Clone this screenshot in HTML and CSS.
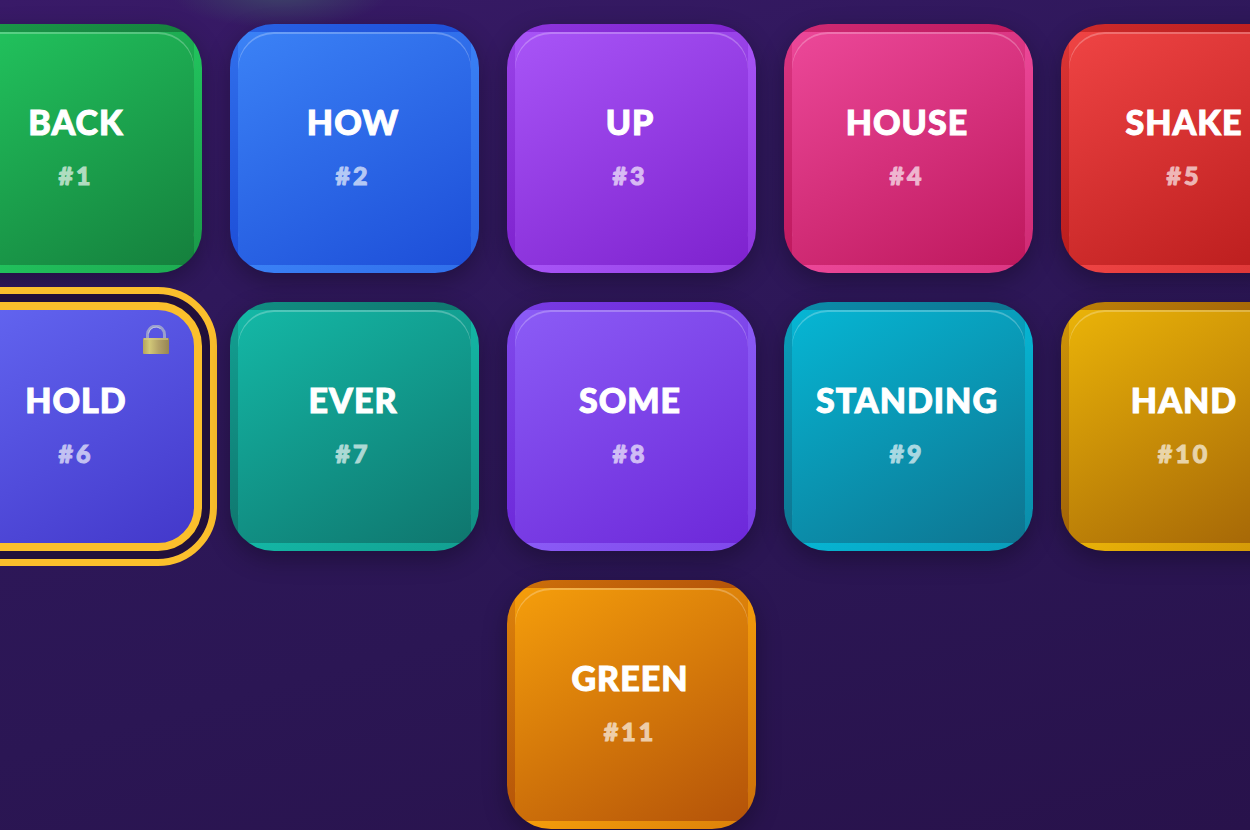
FILE: index.html
```html
<!DOCTYPE html>
<html lang="en">
<head>
	<meta charset="utf-8">
	<meta name="viewport" content="width=device-width, initial-scale=1">
	<title>Words</title>
	<link rel="stylesheet" href="styles.css">
</head>
<body>
	<main class="board">
		<div class="row">
			<button type="button" class="tile green"><span class="word">BACK</span><span class="num">#1</span></button>
			<button type="button" class="tile blue"><span class="word">HOW</span><span class="num">#2</span></button>
			<button type="button" class="tile purple"><span class="word">UP</span><span class="num">#3</span></button>
			<button type="button" class="tile pink"><span class="word">HOUSE</span><span class="num">#4</span></button>
			<button type="button" class="tile red"><span class="word">SHAKE</span><span class="num">#5</span></button>
		</div>
		<div class="row">
			<button type="button" class="tile indigo locked">
				<svg class="lock" viewBox="0 0 28 30" aria-hidden="true">
					<defs>
						<linearGradient id="brass">
							<stop offset="0" stop-color="#b5a45c"/>
							<stop offset="0.25" stop-color="#d2c878"/>
							<stop offset="0.6" stop-color="#b3a267"/>
							<stop offset="1" stop-color="#978653"/>
						</linearGradient>
					</defs>
					<path d="M5.5 14V9.500a8.500 8.500 0 0 1 17 0V14" fill="none" stroke="#9a9fce" stroke-width="3"/>
					<path d="M6.500 8.500a7.500 7.500 0 0 1 12-5" fill="none" stroke="#bcc3e2" stroke-width="1"/>
					<rect x="1" y="13" width="26" height="16" rx="1" fill="url(#brass)"/>
					<path d="M2 14h24" stroke="#d8cf8c" stroke-width="1"/>
				</svg>
				<span class="word">HOLD</span><span class="num">#6</span>
			</button>
			<button type="button" class="tile teal"><span class="word">EVER</span><span class="num">#7</span></button>
			<button type="button" class="tile violet"><span class="word">SOME</span><span class="num">#8</span></button>
			<button type="button" class="tile cyan"><span class="word">STANDING</span><span class="num">#9</span></button>
			<button type="button" class="tile yellow"><span class="word">HAND</span><span class="num">#10</span></button>
		</div>
		<div class="row">
			<button type="button" class="tile amber"><span class="word">GREEN</span><span class="num">#11</span></button>
		</div>
	</main>
</body>
</html>
```
FILE: styles.css
```css
* {
	box-sizing: border-box;
}

body {
	margin: 0;
	min-height: 100vh;
	overflow: hidden;
	font-family: "Lato", "Open Sans", sans-serif;
	background:
		radial-gradient(ellipse 110px 36px at 280px -8px, #3d4468, transparent),
		linear-gradient(165deg, #391a68 0, #2f185b 30%, #2b1654 65%, #28124b 100%);
}

.board {
	display: flex;
	flex-direction: column;
	gap: 29px;
	padding: 24px 0 0 12px;
}

.row {
	display: flex;
	justify-content: center;
	gap: 28px;
}

.tile {
	position: relative;
	display: flex;
	flex-direction: column;
	align-items: center;
	justify-content: center;
	gap: 17px;
	flex: none;
	width: 249px;
	height: 249px;
	padding: 0 2px 4px 0;
	border: 8px solid transparent;
	border-radius: 44px;
	/* the gradient repeats under the clear border and makes the bevel */
	background-image: linear-gradient(150deg, var(--from), var(--to));
	box-shadow: 0 8px 24px rgba(0, 0, 0, 0.3), inset 0 2px 0 rgba(255, 255, 255, 0.25);
	font-family: inherit;
	color: #fff;
	cursor: pointer;
}

.word {
	font-size: 34px;
	line-height: 40px;
	font-weight: 900;
	letter-spacing: 1px;
	-webkit-text-stroke: 1px currentColor;
}

.num {
	font-size: 25px;
	line-height: 32px;
	font-weight: 900;
	letter-spacing: 3px;
	color: #fff;
	opacity: 0.65;
	-webkit-text-stroke: 1px currentColor;
}

.locked {
	border-color: #fbbf2c;
	outline: 7px solid #fbbf2c;
	outline-offset: 8px;
	box-shadow: 0 0 0 8px #22103a;
}

.lock {
	position: absolute;
	top: 15px;
	right: 24px;
	width: 28px;
	height: 30px;
}

.green { --from: #22c55e; --to: #15803d; }
.blue { --from: #3b82f6; --to: #1d4ed8; }
.purple { --from: #a855f7; --to: #7e22ce; }
.pink { --from: #ec4899; --to: #be185d; }
.red { --from: #ef4444; --to: #b91c1c; }
.indigo { --from: #6366f1; --to: #4338ca; }
.teal { --from: #14b8a6; --to: #0f766e; }
.violet { --from: #8b5cf6; --to: #6d28d9; }
.cyan { --from: #06b6d4; --to: #0e7490; }
.yellow { --from: #eab308; --to: #a16207; }
.amber { --from: #f59e0b; --to: #b45309; }
```
